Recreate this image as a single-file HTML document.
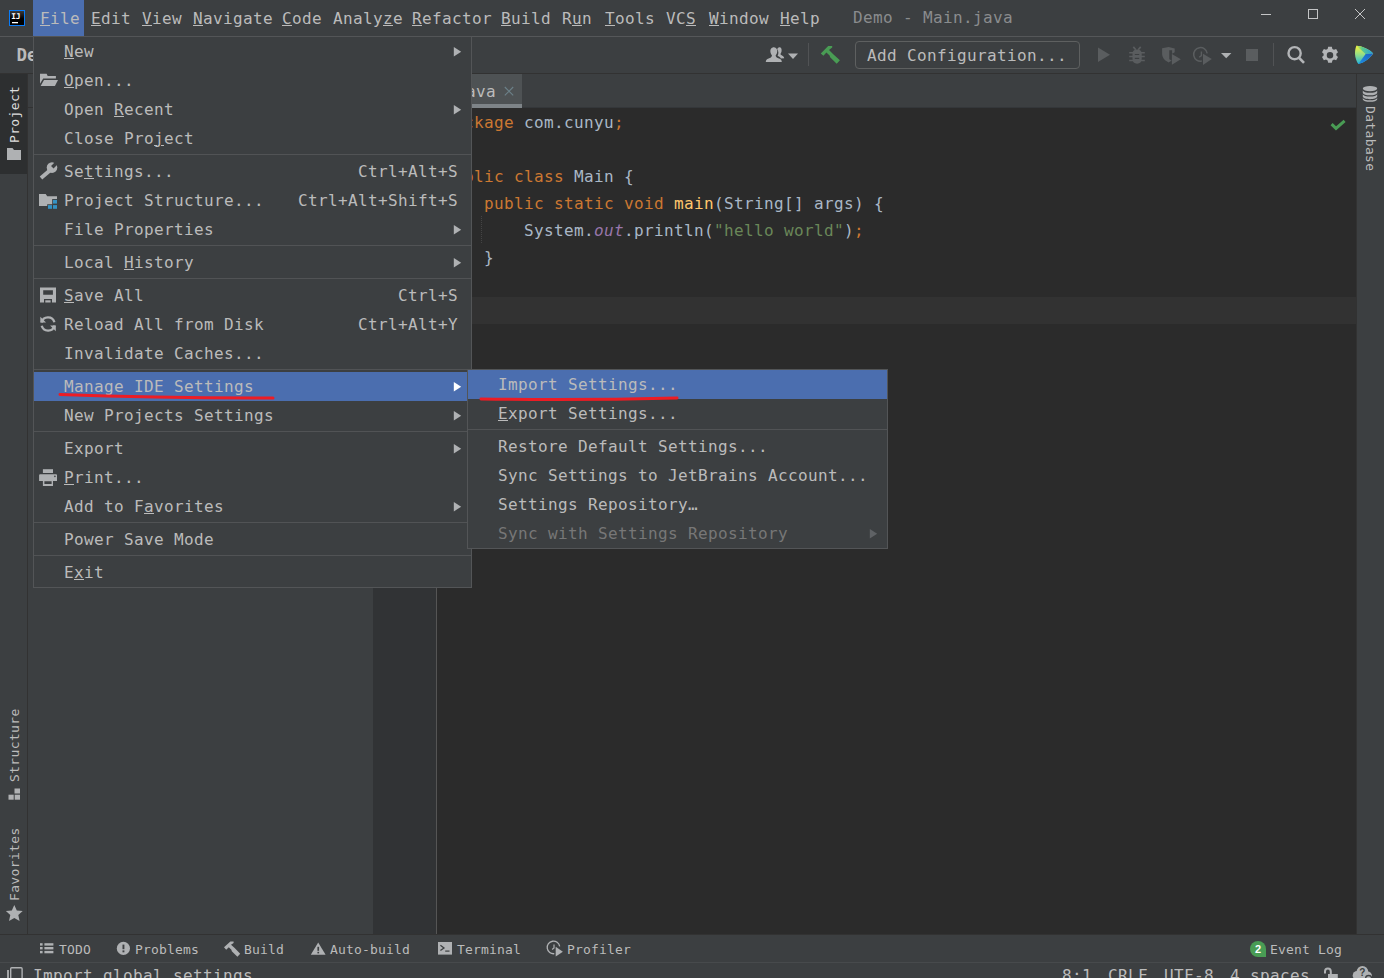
<!DOCTYPE html>
<html lang="en">
<head>
<meta charset="utf-8">
<title>Demo - Main.java</title>
<style>
html,body{margin:0;padding:0;}
body{width:1384px;height:978px;overflow:hidden;background:#3c3f41;position:relative;
 font-family:"DejaVu Sans Mono","Liberation Mono",monospace;font-size:16px;color:#bbbbbb;
 -webkit-font-smoothing:antialiased;}
.a{position:absolute;}
.t{position:absolute;white-space:pre;font-size:16px;letter-spacing:0.367px;line-height:20px;height:20px;color:#bbbbbb;}
.s{position:absolute;white-space:pre;font-size:13px;letter-spacing:0.173px;line-height:16px;height:16px;color:#bbbbbb;}
u{text-decoration:underline;text-decoration-thickness:1px;text-underline-offset:1px;}
svg{position:absolute;overflow:visible;}
/* vertical tool window labels */
.vl{position:absolute;white-space:pre;font-size:13px;letter-spacing:0.350px;line-height:16px;height:16px;color:#bbbbbb;transform-origin:0 0;}
/* popup menus */
.pop{position:absolute;background:#3c3f41;border:1px solid #535557;box-sizing:border-box;}
.row{position:absolute;left:0;right:0;height:29px;}
.row .t{left:30px;top:5px;}
.row .k{left:auto;right:13px;}
.row.sel{background:#4b6eaf;}
.sep{position:absolute;left:0;right:0;height:1px;background:#515355;}
.arr{position:absolute;right:10px;top:10px;width:0;height:0;border-left:7.5px solid #afb1b3;border-top:4.75px solid transparent;border-bottom:4.75px solid transparent;}
.sel .arr{border-left-color:#ffffff;}
.dis .t{color:#777777;}
.dis .arr{border-left-color:#606366;}
/* code */
.c{position:absolute;white-space:pre;font-size:16px;letter-spacing:0.367px;line-height:27px;height:27px;left:444px;color:#a9b7c6;}
.kw{color:#cc7832;}.st{color:#6a8759;}.fn{color:#ffc66d;}.sf{color:#9876aa;font-style:italic;}
</style>
</head>
<body>

<!-- ===== editor area ===== -->
<div class="a" id="editor" style="left:437px;top:108px;width:919px;height:826px;background:#2b2b2b;"></div>
<div class="a" id="curline" style="left:437px;top:297px;width:919px;height:27px;background:#323232;"></div>
<div class="a" id="gutter" style="left:373px;top:108px;width:63px;height:826px;background:#313335;"></div>
<div class="a" id="gutterline" style="left:436px;top:108px;width:1px;height:826px;background:#555555;"></div>

<!-- code -->
<div class="c" style="top:109px;"><span class="kw">package </span>com.cunyu<span class="kw">;</span></div>
<div class="c" style="top:163px;"><span class="kw">public class </span>Main {</div>
<div class="c" style="top:190px;">    <span class="kw">public static void </span><span class="fn">main</span>(String[] args) {</div>
<div class="c" style="top:217px;">        System.<span class="sf">out</span>.println(<span class="st">"hello world"</span>)<span class="kw">;</span></div>
<div class="c" style="top:244px;">    }</div>
<div class="a" id="indent" style="left:481px;top:216px;width:0;height:27px;border-left:1px dotted #444444;"></div>

<!-- ===== tabs row ===== -->
<div class="a" id="tabsline" style="left:373px;top:107px;width:983px;height:1px;background:#34373a;"></div>
<div class="a" id="tab" style="left:400px;top:74px;width:122px;height:30px;background:#4e5254;"></div>
<div class="a" id="tabline" style="left:400px;top:104px;width:122px;height:4px;background:#7e8488;"></div>
<div class="t" style="left:406px;top:82px;">Main.java</div>

<!-- ===== title / menu bar ===== -->
<div class="a" id="menubar" style="left:0;top:0;width:1384px;height:36px;background:#3c3f41;"></div>
<div class="a" id="menubarline" style="left:0;top:36px;width:1384px;height:1px;background:#555759;"></div>
<div class="a" id="filehl" style="left:33px;top:0;width:51px;height:36px;background:#4b6eaf;"></div>
<div class="t" style="left:40px;top:9px;"><u>F</u>ile</div>
<div class="t" style="left:91px;top:9px;"><u>E</u>dit</div>
<div class="t" style="left:142px;top:9px;"><u>V</u>iew</div>
<div class="t" style="left:193px;top:9px;"><u>N</u>avigate</div>
<div class="t" style="left:282px;top:9px;"><u>C</u>ode</div>
<div class="t" style="left:333px;top:9px;">Analy<u>z</u>e</div>
<div class="t" style="left:412px;top:9px;"><u>R</u>efactor</div>
<div class="t" style="left:501px;top:9px;"><u>B</u>uild</div>
<div class="t" style="left:562px;top:9px;">R<u>u</u>n</div>
<div class="t" style="left:605px;top:9px;"><u>T</u>ools</div>
<div class="t" style="left:666px;top:9px;">VC<u>S</u></div>
<div class="t" style="left:709px;top:9px;"><u>W</u>indow</div>
<div class="t" style="left:780px;top:9px;"><u>H</u>elp</div>
<div class="t" style="left:853px;top:8px;color:#8a8c8e;">Demo - Main.java</div>

<!-- ===== toolbar ===== -->
<div class="a" id="toolbarline" style="left:0;top:73px;width:1384px;height:1px;background:#323232;"></div>
<div class="t" style="left:16.500px;top:45px;font-weight:bold;font-size:17.500px;letter-spacing:0;">Demo</div>
<div class="a" id="cfg" style="left:855px;top:41px;width:225px;height:28px;box-sizing:border-box;border:1px solid #5e6060;border-radius:4px;"></div>
<div class="t" style="left:867px;top:46px;">Add Configuration...</div>
<div class="a" style="left:808px;top:43px;width:1px;height:23px;background:#515355;"></div>
<div class="a" style="left:1273px;top:43px;width:1px;height:23px;background:#515355;"></div>

<!-- ===== left strip ===== -->
<div class="a" id="projtab" style="left:0;top:74px;width:27px;height:100px;background:#2d2f30;"></div>
<div class="a" id="leftline" style="left:27px;top:74px;width:1px;height:860px;background:#323232;"></div>
<div class="a" id="projhdrline" style="left:28px;top:107px;width:345px;height:1px;background:#323232;"></div>
<div class="vl" style="left:7px;top:143px;transform:rotate(-90deg);color:#dedede;">Project</div>
<div class="vl" style="left:7px;top:782px;transform:rotate(-90deg);">Structure</div>
<div class="vl" style="left:7px;top:901px;transform:rotate(-90deg);">Favorites</div>

<!-- ===== right strip ===== -->
<div class="a" id="rightline" style="left:1356px;top:74px;width:1px;height:860px;background:#323232;"></div>
<div class="vl" style="left:1378px;top:106px;transform:rotate(90deg);">Database</div>

<!-- ===== bottom tool bar ===== -->
<div class="a" id="botline" style="left:0;top:934px;width:1384px;height:1px;background:#323232;"></div>
<div class="a" id="bot" style="left:0;top:935px;width:1384px;height:43px;background:#3c3f41;"></div>
<div class="a" id="statline" style="left:0;top:962px;width:1384px;height:1px;background:#474a4c;"></div>
<div class="s" style="left:59px;top:942px;">TODO</div>
<div class="s" style="left:135px;top:942px;">Problems</div>
<div class="s" style="left:244px;top:942px;">Build</div>
<div class="s" style="left:330px;top:942px;">Auto-build</div>
<div class="s" style="left:457px;top:942px;">Terminal</div>
<div class="s" style="left:567px;top:942px;">Profiler</div>
<div class="s" style="left:1270px;top:942px;">Event Log</div>

<!-- ===== status bar ===== -->
<div class="t" style="left:33px;top:966px;">Import global settings</div>
<div class="t" style="left:1062px;top:966px;">8:1</div>
<div class="t" style="left:1108px;top:966px;">CRLF</div>
<div class="t" style="left:1164px;top:966px;">UTF-8</div>
<div class="t" style="left:1230px;top:966px;">4 spaces</div>


<!-- ===== main UI icons ===== -->
<svg id="icons" width="1384" height="978" style="left:0;top:0;">
 <defs><linearGradient id="ijg" x1="0" y1="0" x2="0" y2="1"><stop offset="0" stop-color="#3a3a3a"/><stop offset=".55" stop-color="#000000"/><stop offset="1" stop-color="#000000"/></linearGradient></defs>
 <!-- IJ logo -->
 <rect x="9" y="10" width="16" height="16" fill="#087cfa"/>
 <rect x="10" y="11" width="14" height="14" fill="url(#ijg)"/>
 <rect x="12" y="22" width="6" height="1.3" fill="#ffffff"/>
 <text x="11.200" y="19.200" font-family="'DejaVu Sans Mono','Liberation Mono',monospace" font-weight="bold" font-size="7.800" letter-spacing="-0.100" fill="#ffffff">IJ</text>
 <!-- window controls -->
 <rect x="1261" y="14" width="10" height="1" fill="#c4c5c6"/>
 <rect x="1308.5" y="9.5" width="9" height="9" fill="none" stroke="#c4c5c6" stroke-width="1"/>
 <path d="M1355 9 L1365 19 M1365 9 L1355 19" stroke="#c4c5c6" stroke-width="1" fill="none"/>
 <!-- people icon -->
 <g fill="#afb1b3">
  <path d="M777.2 49.2c1.2-2.6 4.2-2.6 4.4 .6c.2 2.2-.6 3.2-1.2 4.2c.4 1.4 3.6 1.6 3.8 4.2l-3.4 .2c-.8-1.6-2.2-2-3.2-2.6c1.2-2.2 1-4.600-.4-6.600z"/>
  <path d="M774 47.200c-2.800 0-3.800 2.200-3.600 4.600c.2 1.800 1 3 1.600 3.800c-.2 1.800-1.600 2.200-3.400 3c-1.800 .8-2.800 1.600-2.800 3.400h16c0-1.800-1-2.600-2.800-3.400c-1.800-.8-3.200-1.200-3.400-3c.6-.8 1.400-2 1.600-3.800c.2-2.400-.8-4.600-3.200-4.600z"/>
  <path d="M788 53.500h10l-5 5.500z"/>
 </g>
 <!-- green hammer -->
 <path fill="#499c54" d="M820.800 53.400L828.200 46H832.200V47.600L829 50L833 54L839.900 60.350L836.700 63.800L830.100 57.200L829.600 55.600L826.400 52.600L823.400 55.800z"/>
 <!-- run (disabled) -->
 <g fill="#5a5d5f">
  <path d="M1098 47.600L1110 54.800L1098 62z"/>
  <!-- bug -->
  <path fill-rule="evenodd" d="M1132.500 53.400c0-2.400 1.800-4 4.600-4s4.600 1.600 4.600 4v5.600c0 2.800-1.800 4.700-4.600 4.700s-4.600-1.900-4.600-4.700zM1134.800 53.900v1.100h4.400v-1.100zM1134.800 57.800v1.100h4.400v-1.100z"/>
  <path d="M1133.300 46.900l2.500 2.800M1140.700 46.900l-2.500 2.800" stroke="#5a5d5f" stroke-width="1.700" fill="none"/>
  <path d="M1129.200 52.700h15.600M1129.200 56.600h15.600M1129.200 60.600h15.600" stroke="#5a5d5f" stroke-width="1.500" fill="none"/>
  <!-- coverage -->
  <path d="M1162.100 48.300l6.500-1.200l6.100 1.400v3.700l-2.600 1.500v-3.500h-2.800v9.100l2.400 1.200l-3.100 1.900c-4.200-1.800-6.500-4.800-6.500-8.800z"/>
  <path d="M1171.900 53.900l8.900 5.400l-8.900 5.450z"/>
  <!-- profiler -->
  <path d="M1203 53.700l8.800 5.400l-8.800 5.800z"/>
  <!-- stop -->
  <rect x="1246" y="49" width="12" height="12"/>
 </g>
 <g fill="none" stroke="#5a5d5f" stroke-width="1.500">
  <path d="M1207.200 53.400A6.800 6.800 0 1 0 1201.800 61.100"/>
  <path d="M1201.400 51.400v4.200l-2.200 1.600" stroke-width="1.400"/>
 </g>
 <path d="M1221 53h10.400l-5.200 5.200z" fill="#afb1b3"/>
 <!-- search -->
 <circle cx="1294.600" cy="53.200" r="6.100" fill="none" stroke="#b3b5b7" stroke-width="2.400"/>
 <path d="M1299.200 58L1304 62.800" stroke="#b3b5b7" stroke-width="2.600" fill="none"/>
 <!-- gear -->
 <g transform="translate(1330 55.200) scale(1.080)" fill="#b3b5b7">
  <path fill-rule="evenodd" d="M-1.700-7.900h3.400l.5 2.100l1.500 .8l2-.8l1.700 3l-1.500 1.400v1.700l1.500 1.400l-1.700 3l-2-.7l-1.500 .8l-.5 2.100h-3.400l-.5-2.100l-1.500-.8l-2 .7l-1.700-3l1.500-1.400v-1.700l-1.500-1.400l1.700-3l2 .8l1.500-.8zM0-3a3 3 0 1 0 0 6a3 3 0 1 0 0-6z"/>
 </g>
 <!-- space logo -->
 <defs>
  <linearGradient id="sp1" x1="0" y1="0" x2="0" y2="1"><stop offset="0" stop-color="#f8f23a"/><stop offset=".5" stop-color="#8fdc8a"/><stop offset="1" stop-color="#22b4dc"/></linearGradient>
 <linearGradient id="sp2" x1="0" y1="0" x2="1" y2="0"><stop offset="0" stop-color="#d4ea4c"/><stop offset=".35" stop-color="#5cc98a"/><stop offset="1" stop-color="#1f9fe6"/></linearGradient>
  <linearGradient id="sp3" x1="0" y1="1" x2="1" y2="0"><stop offset="0" stop-color="#1f8fe0"/><stop offset="1" stop-color="#1b5fc4"/></linearGradient>
 </defs>
 <path d="M1356.400 45.800c4.800 0 12.400 3.200 16.800 7.700c-3 4.500-8.800 9-14.800 10.600c-1.600-2.200-3.400-6.400-3.400-10.400c0-3.400 .6-6.200 1.400-7.900z" fill="url(#sp1)"/>
 <path d="M1356.400 45.800c4.800 0 12.400 3.200 16.800 7.700l-7.600 .5z" fill="url(#sp2)"/>
 <path d="M1373.200 53.500c-3 4.500-8.800 9-14.800 10.600l7.200-10.100z" fill="url(#sp3)"/>
 <!-- tab close -->
 <path d="M504.800 87l8.400 8.400m0-8.400l-8.400 8.400" stroke="#6c8189" stroke-width="1.100" fill="none"/>
 <!-- project tool window icon -->
 <path d="M7 148h5.500l1.500 2h7v10h-14z" fill="#afb1b3"/>
 <!-- structure icon -->
 <g fill="#afb1b3"><rect x="14.500" y="788.500" width="5.500" height="5"/><rect x="8.500" y="794.700" width="5.200" height="5"/><rect x="14.700" y="794.700" width="5.300" height="5"/></g>
 <!-- favorites star -->
 <path d="M14.300 905l2.500 5.500l5.900 .6l-4.400 4l1.300 5.900l-5.300-3.100l-5.300 3.100l1.300-5.900l-4.400-4l5.900-.6z" fill="#afb1b3"/>
 <!-- database icon -->
 <g fill="#afb1b3">
  <ellipse cx="1370" cy="88.600" rx="7.200" ry="2.600"/>
  <path d="M1362.800 90.200c0 3.400 14.400 3.400 14.400 0v2.600c0 3.400-14.400 3.400-14.400 0z"/>
  <path d="M1362.800 94c0 3.400 14.400 3.400 14.400 0v2.600c0 3.400-14.400 3.400-14.400 0z"/>
  <path d="M1362.800 97.800c0 3.400 14.400 3.400 14.400 0v1.400c0 3.400-14.400 3.400-14.400 0z"/>
 </g>
 <!-- inspection ok check -->
 <path d="M1331.600 124.200l4.400 4.200l8.600-7.600" stroke="#499c54" stroke-width="3" fill="none"/>
 <!-- bottom tool window icons -->
 <g fill="#afb1b3">
  <rect x="40" y="943.200" width="2.600" height="2.400"/><rect x="44.400" y="943.200" width="9" height="2.400"/>
  <rect x="40" y="947" width="2.600" height="2.400"/><rect x="44.400" y="947" width="9" height="2.400"/>
  <rect x="40" y="950.900" width="2.600" height="2.400"/><rect x="44.400" y="950.900" width="9" height="2.400"/>
  <circle cx="123.400" cy="948.400" r="6.600"/>
  <path d="M224 947.300L230.400 941.600H233.600V943L231 944.800L234.400 947.800L240.200 953.800L237.400 956.800L231.800 951.200L231.400 949.800L228.800 947.200L226.200 949.800z"/>
  <path d="M318.200 942.400L325.600 954.800H310.800z"/>
  <rect x="438" y="942" width="14" height="12.600"/>
  <path d="M555.700 946.800l7.200 4.900l-7.200 4.900z"/>
 </g>
 <rect x="122.500" y="944.600" width="1.900" height="4.600" fill="#3c3f41"/><rect x="122.500" y="950.400" width="1.900" height="1.900" fill="#3c3f41"/>
 <rect x="317.400" y="946.800" width="1.700" height="4" fill="#3c3f41"/><rect x="317.400" y="951.800" width="1.700" height="1.600" fill="#3c3f41"/>
 <path d="M440.400 945.200l3.600 2.700l-3.600 2.700" stroke="#3c3f41" stroke-width="1.300" fill="none"/><rect x="445.200" y="950.500" width="4.300" height="1.200" fill="#3c3f41"/>
 <g fill="none" stroke="#afb1b3" stroke-width="1.300">
  <path d="M559.700 946.300A6.300 6.300 0 1 0 554.300 953.700"/>
  <path d="M554 944.400v3.500l-1.900 1.600" stroke-width="1.200"/>
 </g>
 <!-- event log badge -->
 <path d="M1258 941a8 8 0 0 1 8 8v8h-8a8 8 0 0 1 0-16z" fill="#499c54"/>
 <text x="1258" y="953" text-anchor="middle" font-family="'Liberation Sans','DejaVu Sans',sans-serif" font-weight="bold" font-size="11" fill="#ffffff">2</text>
 <!-- status bar icons -->
 <g fill="none" stroke="#afb1b3" stroke-width="1.400">
  <rect x="10.700" y="967.800" width="11.400" height="14" rx="1"/>
  <path d="M8 970v10" stroke-width="1.800"/>
  <path d="M1325 973.600v-2.100a2.900 2.900 0 0 1 5.800 0v2.500" stroke-width="2"/>
 </g>
 <rect x="1328" y="974" width="9.800" height="6" fill="#afb1b3"/>
 <g fill="#afb1b3">
  <circle cx="1362.400" cy="971.800" r="5.900"/><circle cx="1357.200" cy="975.400" r="4.500"/><circle cx="1367.600" cy="975.800" r="4.400"/><rect x="1357" y="974" width="11" height="6"/>
 </g>
 <text x="1362.300" y="976" text-anchor="middle" font-family="'Liberation Sans','DejaVu Sans',sans-serif" font-weight="bold" font-size="10" fill="#3c3f41">?</text>
 <circle cx="1368.600" cy="978.400" r="3.600" fill="#3c3f41"/><circle cx="1368.600" cy="978.600" r="2.400" fill="#afb1b3"/>
</svg>

<!-- ===== File menu popup ===== -->
<div class="pop" id="filemenu" style="left:33px;top:36px;width:439px;height:552px;">
 <div class="row" style="top:0px;"><div class="t"><u>N</u>ew</div></div>
 <div class="row" style="top:29px;"><div class="t"><u>O</u>pen...</div></div>
 <div class="row" style="top:58px;"><div class="t">Open <u>R</u>ecent</div></div>
 <div class="row" style="top:87px;"><div class="t">Close Pro<u>j</u>ect</div></div>
 <div class="sep" style="top:117px;"></div>
 <div class="row" style="top:120px;"><div class="t">Se<u>t</u>tings...</div><div class="t k">Ctrl+Alt+S</div></div>
 <div class="row" style="top:149px;"><div class="t">Project Structure...</div><div class="t k">Ctrl+Alt+Shift+S</div></div>
 <div class="row" style="top:178px;"><div class="t">File Properties</div></div>
 <div class="sep" style="top:208px;"></div>
 <div class="row" style="top:211px;"><div class="t">Local <u>H</u>istory</div></div>
 <div class="sep" style="top:241px;"></div>
 <div class="row" style="top:244px;"><div class="t"><u>S</u>ave All</div><div class="t k">Ctrl+S</div></div>
 <div class="row" style="top:273px;"><div class="t">Reload All from Disk</div><div class="t k">Ctrl+Alt+Y</div></div>
 <div class="row" style="top:302px;"><div class="t">Invalidate Caches...</div></div>
 <div class="sep" style="top:332px;"></div>
 <div class="row sel" style="top:335px;"><div class="t">Manage IDE Settings</div></div>
 <div class="row" style="top:364px;"><div class="t">New Projects Settings</div></div>
 <div class="sep" style="top:394px;"></div>
 <div class="row" style="top:397px;"><div class="t">Export</div></div>
 <div class="row" style="top:426px;"><div class="t"><u>P</u>rint...</div></div>
 <div class="row" style="top:455px;"><div class="t">Add to F<u>a</u>vorites</div></div>
 <div class="sep" style="top:485px;"></div>
 <div class="row" style="top:488px;"><div class="t">Power Save Mode</div></div>
 <div class="sep" style="top:518px;"></div>
 <div class="row" style="top:521px;"><div class="t">E<u>x</u>it</div></div>
</div>

<!-- ===== submenu ===== -->
<div class="pop" id="submenu" style="left:467px;top:369px;width:421px;height:180px;">
 <div class="row sel" style="top:0px;"><div class="t">Import Settings...</div></div>
 <div class="row" style="top:29px;"><div class="t"><u>E</u>xport Settings...</div></div>
 <div class="sep" style="top:59px;"></div>
 <div class="row" style="top:62px;"><div class="t">Restore Default Settings...</div></div>
 <div class="row" style="top:91px;"><div class="t">Sync Settings to JetBrains Account...</div></div>
 <div class="row" style="top:120px;"><div class="t">Settings Repository…</div></div>
 <div class="row dis" style="top:149px;"><div class="t">Sync with Settings Repository</div></div>
</div>


<!-- ===== menu icons & submenu arrows ===== -->
<svg id="menuicons" width="1384" height="978" style="left:0;top:0;">
 <path d="M453.8 46.90L461.2 51.65L453.8 56.40z" fill="#afb1b3"/>
 <path d="M453.8 104.90L461.2 109.65L453.8 114.40z" fill="#afb1b3"/>
 <path d="M453.8 224.90L461.2 229.65L453.8 234.40z" fill="#afb1b3"/>
 <path d="M453.8 257.90L461.2 262.65L453.8 267.40z" fill="#afb1b3"/>
 <path d="M453.8 410.90L461.2 415.65L453.8 420.40z" fill="#afb1b3"/>
 <path d="M453.8 443.90L461.2 448.65L453.8 453.40z" fill="#afb1b3"/>
 <path d="M453.8 501.90L461.2 506.65L453.8 511.40z" fill="#afb1b3"/>
 <path d="M453.8 381.90L461.2 386.65L453.8 391.40z" fill="#ffffff"/>
 <path d="M869.8 528.90L877.2 533.65L869.8 538.40z" fill="#5f6265"/>
 <g fill="#afb1b3">
  <!-- open -->
  <path d="M40 73.700h6.600l1.100 2.300h8.200v2.600h-12.700l-3.200 5.200z"/>
  <path d="M44 80h14l-3.100 6h-14.300z"/>
  <!-- settings wrench -->
  <path d="M41 178.100L50.400 170" stroke="#afb1b3" stroke-width="3.900" fill="none"/>
  <circle cx="52" cy="167.600" r="5.300"/>
  <path d="M52.300 167.300L58.500 161.100" stroke="#3c3f41" stroke-width="3.500" fill="none"/>
  <!-- project structure -->
  <path d="M39 194h6.700l1.500 2.200h9.800v2.800h-4.800v5.200h-5v1.800h-8.200z"/>
  <!-- save all -->
  <path fill-rule="evenodd" d="M40 287.500h16v15h-4v-3.500h-8v3.500h-4zM43.200 290.200v4.500h9.700v-4.500z"/>
  <rect x="45.300" y="300.300" width="5.300" height="2.200"/>
  <!-- print -->
  <rect x="42.900" y="469.200" width="10.100" height="3.800"/>
  <path fill-rule="evenodd" d="M40.100 474.300h15.900a1 1 0 0 1 1 1v5.600h-4v5h-10.100v-5h-3.800v-5.600a1 1 0 0 1 1-1zM44.400 481.200v2.900h7.200v-2.900z"/>
 </g>
 <circle cx="54.900" cy="476.400" r=".8" fill="#3c3f41"/>
 <g fill="#3592c4"><rect x="53" y="199.900" width="4" height="3.700"/><rect x="48" y="205.100" width="4" height="3.700"/><rect x="53" y="205.100" width="4" height="3.700"/></g>
 <!-- reload -->
 <g fill="none" stroke="#afb1b3" stroke-width="2.300">
  <path d="M41.600 322.600A6.600 6.600 0 0 1 54.400 322.300"/>
  <path d="M54.500 325.400A6.600 6.600 0 0 1 41.700 325.700"/>
 </g>
 <path d="M40.300 316.800v5.700h5.700z" fill="#afb1b3"/>
 <path d="M55.800 331.200v-5.700h-5.700z" fill="#afb1b3"/>
</svg>

<!-- red annotation strokes -->
<svg id="red" width="1384" height="978" style="left:0;top:0;pointer-events:none;">
 <path d="M60 394.5 Q160 398 273 398" stroke="#ed1c24" stroke-width="3" fill="none" stroke-linecap="round"/>
 <path d="M481 399 Q580 400.5 677 398" stroke="#ed1c24" stroke-width="3" fill="none" stroke-linecap="round"/>
</svg>

</body>
</html>
